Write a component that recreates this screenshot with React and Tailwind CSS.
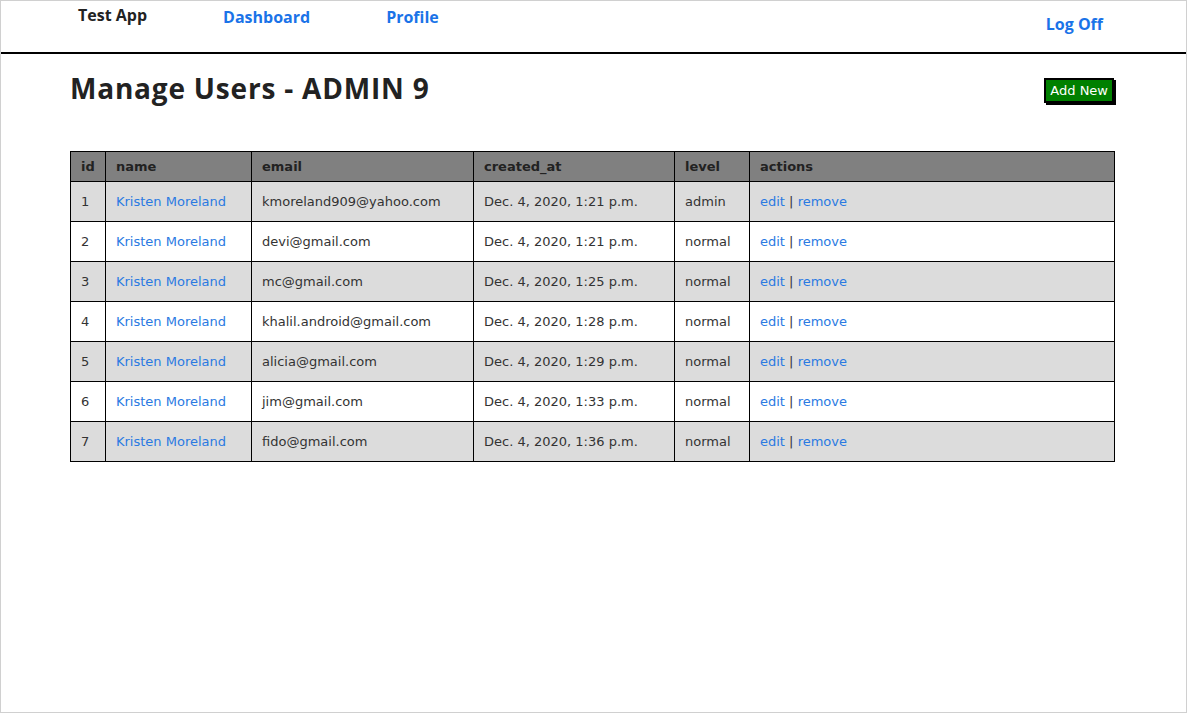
import React from "react";

const users = [
  { id: 1, email: "kmoreland909@yahoo.com", created: "Dec. 4, 2020, 1:21 p.m.", level: "admin" },
  { id: 2, email: "devi@gmail.com", created: "Dec. 4, 2020, 1:21 p.m.", level: "normal" },
  { id: 3, email: "mc@gmail.com", created: "Dec. 4, 2020, 1:25 p.m.", level: "normal" },
  { id: 4, email: "khalil.android@gmail.com", created: "Dec. 4, 2020, 1:28 p.m.", level: "normal" },
  { id: 5, email: "alicia@gmail.com", created: "Dec. 4, 2020, 1:29 p.m.", level: "normal" },
  { id: 6, email: "jim@gmail.com", created: "Dec. 4, 2020, 1:33 p.m.", level: "normal" },
  { id: 7, email: "fido@gmail.com", created: "Dec. 4, 2020, 1:36 p.m.", level: "normal" },
];

function Navbar() {
  return (
    <nav className="flex h-[53px] border-b-2 border-black font-['Open_Sans',sans-serif] text-[16px] font-bold">
      <a href="#" className="ml-[77px] mt-[2px] text-[#222]">Test App</a>
      <a href="#" className="ml-[76px] mt-[4px] text-[#1a73e8]">Dashboard</a>
      <a href="#" className="ml-[76px] mt-[4px] text-[#1a73e8]">Profile</a>
      <a href="#" className="ml-auto mr-[83px] mt-[11px] text-[#1a73e8]">Log Off</a>
    </nav>
  );
}

function App() {
  return (
    <div className="h-[713px] w-full overflow-hidden border border-[#d0d0d0] bg-white">
      <Navbar />
      <main className="px-[69px]">
        <div className="mt-[14px] flex items-start justify-between">
          <h1 className="font-['Open_Sans',sans-serif] text-[28px] font-bold leading-[40px] tracking-[0.8px] text-[#222]">
            Manage Users - ADMIN 9
          </h1>
          <button className="mr-[3px] mt-[10px] border-2 border-black bg-[#008000] px-[4px] pb-[2px] pt-[3px] font-['DejaVu_Sans',sans-serif] text-[13px] leading-[16px] text-white shadow-[2px_2px_0_#000]">
            Add New
          </button>
        </div>
        <table className="mt-[43px] w-[1045px] table-fixed border-collapse font-['DejaVu_Sans',sans-serif] text-[13px] text-[#333]">
          <colgroup>
            <col className="w-[35px]" />
            <col className="w-[146px]" />
            <col className="w-[222px]" />
            <col className="w-[201px]" />
            <col className="w-[75px]" />
            <col />
          </colgroup>
          <thead>
            <tr className="h-[30px] bg-[#808080] text-left text-[13px] font-bold text-[#222]">
              <th className="border border-black px-[10px]">id</th>
              <th className="border border-black px-[10px]">name</th>
              <th className="border border-black px-[10px]">email</th>
              <th className="border border-black px-[10px]">created_at</th>
              <th className="border border-black px-[10px]">level</th>
              <th className="border border-black px-[10px]">actions</th>
            </tr>
          </thead>
          <tbody>
            {users.map((u, i) => (
              <tr key={u.id} className={i % 2 === 0 ? "h-[40px] bg-[#dcdcdc]" : "h-[40px] bg-white"}>
                <td className="border border-black px-[10px]">{u.id}</td>
                <td className="border border-black px-[10px]">
                  <a href="#" className="text-[#2a7ae2]">Kristen Moreland</a>
                </td>
                <td className="border border-black px-[10px]">{u.email}</td>
                <td className="border border-black px-[10px]">{u.created}</td>
                <td className="border border-black px-[10px]">{u.level}</td>
                <td className="border border-black px-[10px]">
                  <a href="#" className="text-[#2a7ae2]">edit</a> |{" "}
                  <a href="#" className="text-[#2a7ae2]">remove</a>
                </td>
              </tr>
            ))}
          </tbody>
        </table>
      </main>
    </div>
  );
}

export default App;
